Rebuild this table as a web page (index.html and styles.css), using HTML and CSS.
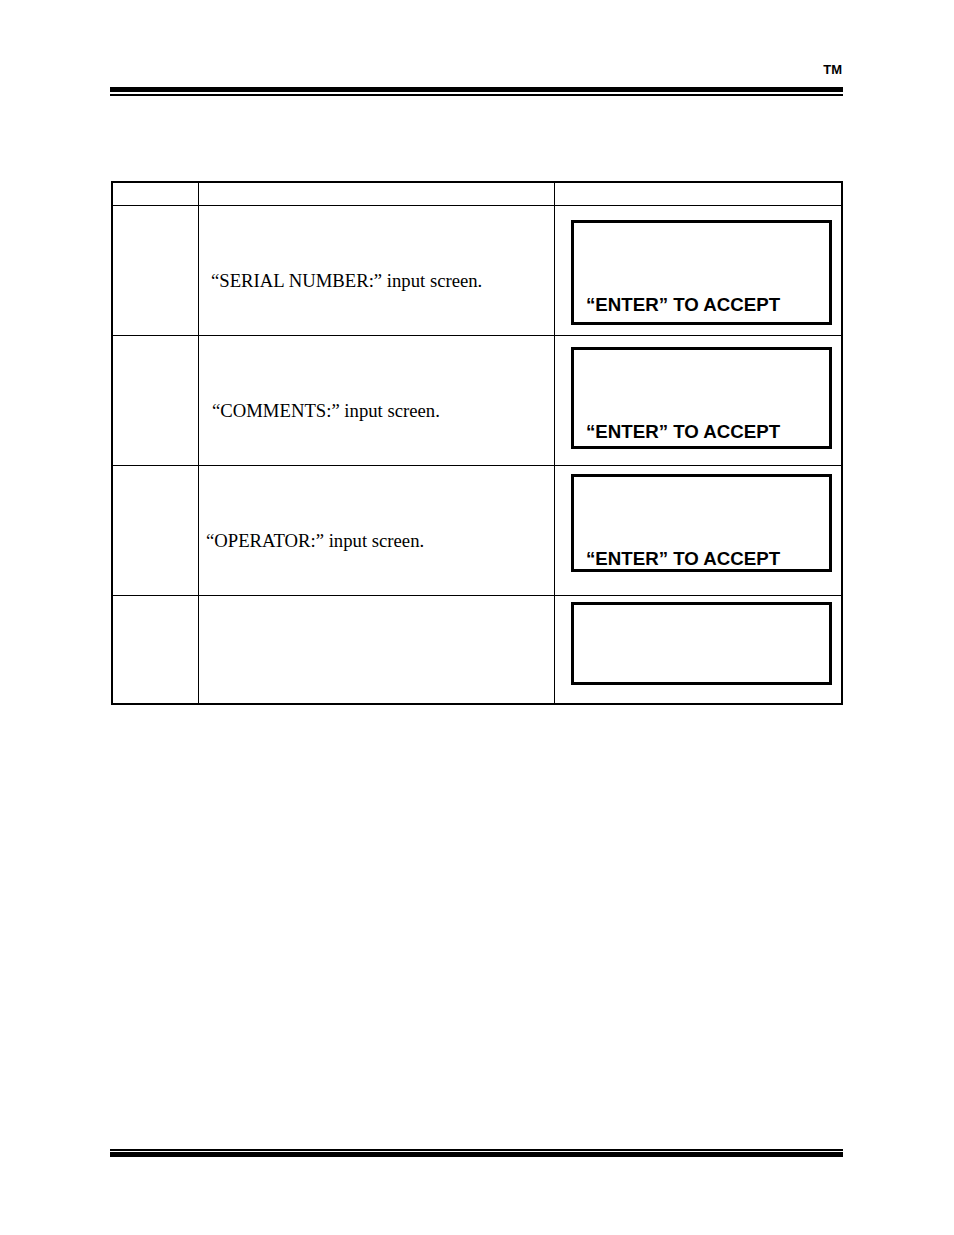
FILE: index.html
```html
<!DOCTYPE html>
<html lang="en">
<head>
<meta charset="utf-8">
<title>Input screens</title>
<link rel="stylesheet" href="styles.css">
</head>
<body>
<div class="page">
  <header class="head"><span class="tm">TM</span></header>
  <div class="rule rule-top"></div>

  <div class="grid">
    <div class="cell c1 hdr"></div>
    <div class="cell c2 hdr"></div>
    <div class="cell c3 hdr"></div>

    <div class="cell c1 r1"></div>
    <div class="cell c2 r1"><p class="desc">“SERIAL NUMBER:” input screen.</p></div>
    <div class="cell c3 r1"><div class="lcd lcd1"><span class="lcd-text">“ENTER” TO ACCEPT</span></div></div>

    <div class="cell c1 r2"></div>
    <div class="cell c2 r2"><p class="desc desc-b">“COMMENTS:” input screen.</p></div>
    <div class="cell c3 r2"><div class="lcd lcd2"><span class="lcd-text">“ENTER” TO ACCEPT</span></div></div>

    <div class="cell c1 r3"></div>
    <div class="cell c2 r3"><p class="desc desc-c">“OPERATOR:” input screen.</p></div>
    <div class="cell c3 r3"><div class="lcd lcd3"><span class="lcd-text">“ENTER” TO ACCEPT</span></div></div>

    <div class="cell c1 r4 last"></div>
    <div class="cell c2 r4 last"></div>
    <div class="cell c3 r4 last"><div class="lcd lcd4"></div></div>
  </div>

  <div class="rule rule-bottom"></div>
</div>
</body>
</html>
```

FILE: styles.css
```css
html, body {
  margin: 0;
  padding: 0;
  background: #fff;
  color: #000;
}

.page {
  display: flex;
  flex-direction: column;
  height: 1235px;
  box-sizing: border-box;
  padding: 61px 111px 78px 110px;
}

.head {
  display: flex;
  justify-content: flex-end;
  height: 26px;
}

.tm {
  font-family: "Liberation Sans", Arial, sans-serif;
  font-weight: bold;
  font-size: 13px;
  line-height: 15px;
  margin-top: 1px;
  margin-right: 1px;
}

.rule {
  width: 733px;
  box-sizing: border-box;
}

.rule-top {
  border-top: 5px solid #000;
  border-bottom: 2px solid #000;
  height: 9px;
}

.rule-bottom {
  margin-top: auto;
  border-top: 2px solid #000;
  border-bottom: 5px solid #000;
  height: 8px;
}

.grid {
  margin-top: 85px;
  margin-left: 1px;
  width: 732px;
  box-sizing: border-box;
  border: 2px solid #000;
  display: grid;
  grid-template-columns: 86px 356px 1fr;
  grid-template-rows: 23px 130px 130px 130px 107px;
}

.cell {
  box-sizing: border-box;
  border-bottom: 1px solid #000;
  border-right: 1px solid #000;
}

.cell.c3 { border-right: none; }
.cell.last { border-bottom: none; }

.desc {
  margin: 0;
  padding: 64px 0 0 12px;
  font-family: "Liberation Serif", "Times New Roman", serif;
  font-size: 18.7px;
  line-height: 22px;
}

.desc-b { padding-left: 13px; }
.desc-c { padding-left: 7px; }

.lcd {
  margin-left: 16px;
  width: 261px;
  box-sizing: border-box;
  border: 3px solid #000;
  padding: 72px 0 0 12px;
}

.lcd1 { margin-top: 14px; height: 105px; }
.lcd2 { margin-top: 11px; height: 102px; }
.lcd3 { margin-top: 8px; height: 98px; }
.lcd4 { margin-top: 6px; height: 83px; }

.lcd-text {
  display: block;
  font-family: "Liberation Sans", Arial, sans-serif;
  font-weight: bold;
  font-size: 18.7px;
  line-height: 19px;
  white-space: nowrap;
}
```
